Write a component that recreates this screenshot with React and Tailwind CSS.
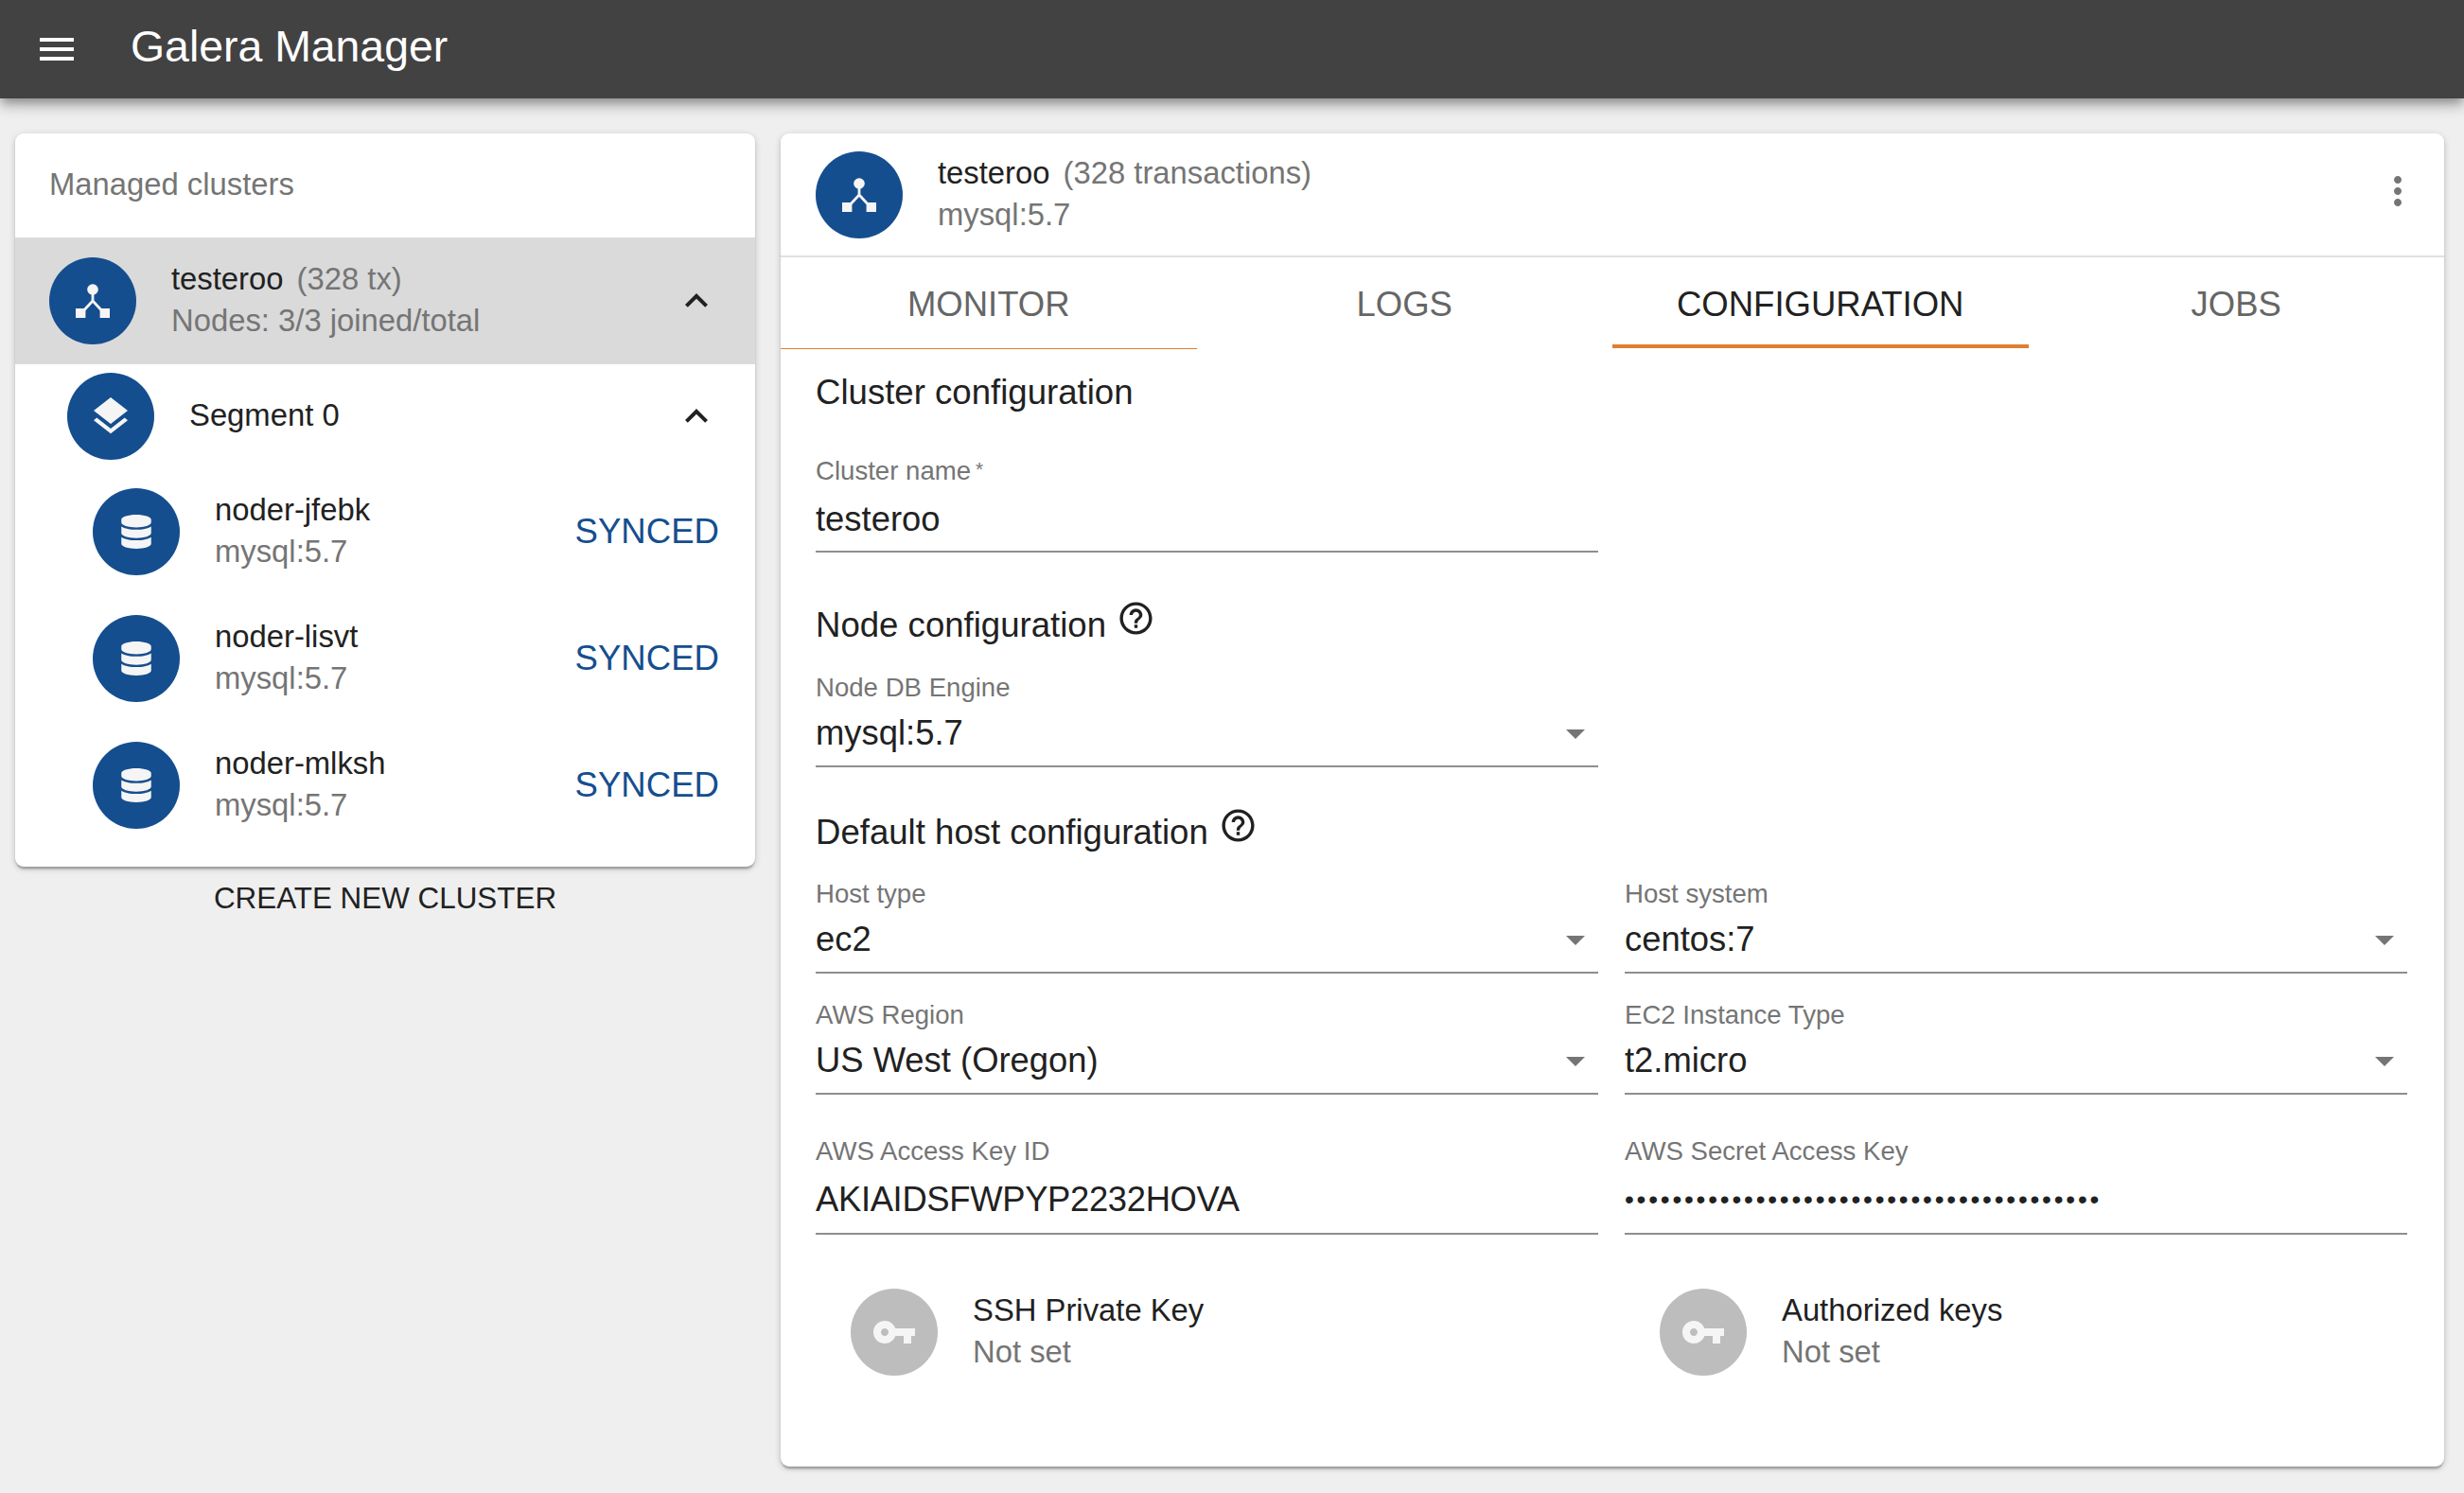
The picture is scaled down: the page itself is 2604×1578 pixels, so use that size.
import React from "react";
import { FaDatabase } from "react-icons/fa";

const Ic = ({ d, className }) => (
  <svg viewBox="0 0 24 24" fill="currentColor" className={className}><path d={d} /></svg>
);
const MENU = "M3 18h18v-2H3v2zm0-5h18v-2H3v2zm0-7v2h18V6H3z";
const LESS = "M12 8l-6 6 1.41 1.41L12 10.83l4.59 4.58L18 14z";
const LAYERS = "M11.99 18.54l-7.37-5.73L3 14.07l9 7 9-7-1.63-1.27-7.38 5.74zM12 16l7.36-5.73L21 9l-9-7-9 7 1.63 1.27L12 16z";
const KEY = "M12.65 10C11.83 7.67 9.61 6 7 6c-3.31 0-6 2.69-6 6s2.69 6 6 6c2.61 0 4.83-1.67 5.65-4H17v4h4v-4h2v-4H12.65zM7 14c-1.1 0-2-.9-2-2s.9-2 2-2 2 .9 2 2-.9 2-2 2z";
const HELP = "M11 18h2v-2h-2v2zm1-16C6.48 2 2 6.48 2 12s4.48 10 10 10 10-4.48 10-10S17.52 2 12 2zm0 18c-4.41 0-8-3.59-8-8s3.59-8 8-8 8 3.59 8 8-3.59 8-8 8zm0-14c-2.21 0-4 1.79-4 4h2c0-1.1.9-2 2-2s2 .9 2 2c0 2-3 1.75-3 5h2c0-2.25 3-2.5 3-5 0-2.21-1.79-4-4-4z";
const MORE = "M12 8c1.1 0 2-.9 2-2s-.9-2-2-2-2 .9-2 2 .9 2 2 2zm0 2c-1.1 0-2 .9-2 2s.9 2 2 2 2-.9 2-2-.9-2-2-2zm0 6c-1.1 0-2 .9-2 2s.9 2 2 2 2-.9 2-2-.9-2-2-2z";
const DROP = "M7 10l5 5 5-5z";

const ClusterIcon = () => (
  <svg viewBox="0 0 24 24" className="w-[48px] h-[48px] text-[#f5f5f5]" fill="currentColor">
    <circle cx="12" cy="6" r="2.9" />
    <path d="M12 8v4l-5 5.4M12 12l5 5.4" fill="none" stroke="currentColor" strokeWidth="1.4" />
    <rect x="3" y="16" width="5.2" height="5" />
    <rect x="15.8" y="16" width="5.2" height="5" />
  </svg>
);

const Avatar = ({ children, grey }) => (
  <div className={`w-[92px] h-[92px] rounded-full flex items-center justify-center shrink-0 ${grey ? "bg-[#bdbdbd]" : "bg-[#154e8f]"}`}>{children}</div>
);

const NodeRow = ({ name }) => (
  <div className="h-[134px] flex items-center pl-[82px] pr-[38px]">
    <Avatar><FaDatabase className="w-[32px] h-[36px] text-[#f5f5f5]" /></Avatar>
    <div className="ml-[37px] flex-1 -mt-[3px]">
      <div className="text-[32.8px] leading-[44px] text-[#212121]">{name}</div>
      <div className="text-[32.8px] leading-[44px] text-[#757575]">mysql:5.7</div>
    </div>
    <div className="text-[36.6px] text-[#154e8f]">SYNCED</div>
  </div>
);

const Field = ({ label, value, select, input, valueClass = "" }) => (
  <div className={`flex-1 min-w-0 border-b-2 border-[#8e8e8e] ${input ? "h-[104px]" : "h-[100px]"}`}>
    <div className="text-[27.6px] leading-[32px] text-[#757575]">{label}</div>
    <div className={`flex items-center h-[44px] text-[36.4px] text-[#212121] ${input ? "mt-[13px]" : "mt-[10px]"}`}>
      <span className={`flex-1 whitespace-nowrap ${valueClass}`}>{value}</span>
      {select && <Ic d={DROP} className="w-[48px] h-[48px] text-[#757575]" />}
    </div>
  </div>
);

const Heading = ({ children, help, className = "" }) => (
  <div className={`flex items-center text-[36.6px] leading-[44px] text-[#212121] ${className}`}>
    {children}
    {help && <Ic d={HELP} className="w-[41px] h-[41px] ml-[11px] -mt-[15px] text-[#212121]" />}
  </div>
);

const KeyItem = ({ title }) => (
  <div className="flex-1 flex items-center pl-[37px]">
    <Avatar grey><Ic d={KEY} className="w-[48px] h-[48px] text-[#f5f5f5]" /></Avatar>
    <div className="ml-[37px] -mt-[3px]">
      <div className="text-[32.8px] leading-[44px] text-[#212121]">{title}</div>
      <div className="text-[32.8px] leading-[44px] text-[#757575]">Not set</div>
    </div>
  </div>
);

const Tab = ({ children, active, thin }) => (
  <div className={`relative flex-1 flex items-center justify-center pt-[3px] text-[36.5px] ${active ? "text-[#212121]" : "text-[#666666]"}`}>
    {children}
    {active && <div className="absolute left-0 right-0 bottom-[1px] h-[4px] bg-[#e07f2e]" />}
    {thin && <div className="absolute left-0 right-0 bottom-0 h-[1.5px] bg-[#e07f2e]" />}
  </div>
);

export default function App() {
  return (
    <div className="w-[2604px] h-[1578px] bg-[#efefef] overflow-hidden font-['Liberation_Sans',Arial,sans-serif]">
      <header className="h-[104px] bg-[#424242] flex items-center pl-[36px] text-white shadow-[0_5px_9px_-2px_rgba(0,0,0,0.26),0_9px_12px_0_rgba(0,0,0,0.16),0_2px_23px_0_rgba(0,0,0,0.12)]">
        <Ic d={MENU} className="w-[48px] h-[48px]" />
        <div className="ml-[54px] -mt-[6px] text-[46.4px] leading-none">Galera Manager</div>
      </header>
      <main className="flex items-start gap-[27px] pl-[16px] pr-[21px] pt-[37px]">
        <div className="w-[782px] shrink-0">
          <div className="bg-white rounded-[9px] overflow-hidden shadow-[0_2px_7px_0_rgba(0,0,0,0.2),0_2px_2px_0_rgba(0,0,0,0.14),0_5px_2px_-2px_rgba(0,0,0,0.12)] pb-[19px]">
            <div className="h-[110px] flex items-center pl-[36px] pb-[3px] text-[32.8px] text-[#757575]">Managed clusters</div>
            <div className="h-[134px] bg-[#dadada] flex items-center pl-[36px] pr-[38px]">
              <Avatar><ClusterIcon /></Avatar>
              <div className="ml-[37px] flex-1 -mt-[3px]">
                <div className="text-[32.8px] leading-[44px] text-[#212121]">testeroo<span className="ml-[14px] text-[#757575]">(328 tx)</span></div>
                <div className="text-[32.8px] leading-[44px] text-[#757575]">Nodes: 3/3 joined/total</div>
              </div>
              <Ic d={LESS} className="w-[48px] h-[48px] text-[#212121]" />
            </div>
            <div className="h-[110px] flex items-center pl-[55px] pr-[38px]">
              <Avatar><Ic d={LAYERS} className="w-[48px] h-[48px] text-[#f5f5f5]" /></Avatar>
              <div className="ml-[37px] flex-1 -mt-[3px] text-[32.8px] text-[#212121]">Segment 0</div>
              <Ic d={LESS} className="w-[48px] h-[48px] text-[#212121]" />
            </div>
            <NodeRow name="noder-jfebk" />
            <NodeRow name="noder-lisvt" />
            <NodeRow name="noder-mlksh" />
          </div>
          <div className="h-[68px] flex items-center justify-center text-[31.4px] text-[#212121]">CREATE NEW CLUSTER</div>
        </div>

        <div className="flex-1 h-[1409px] bg-white rounded-[9px] overflow-hidden shadow-[0_2px_7px_0_rgba(0,0,0,0.2),0_2px_2px_0_rgba(0,0,0,0.14),0_5px_2px_-2px_rgba(0,0,0,0.12)]">
          <div className="h-[131px] border-b-2 border-[#e0e0e0] flex items-center pl-[37px] pr-[25px]">
            <Avatar><ClusterIcon /></Avatar>
            <div className="ml-[37px] flex-1 -mt-[2px]">
              <div className="text-[32.8px] leading-[44px] text-[#212121]">testeroo<span className="ml-[14px] text-[#757575]">(328 transactions)</span></div>
              <div className="text-[32.8px] leading-[44px] text-[#757575]">mysql:5.7</div>
            </div>
            <Ic d={MORE} className="w-[48px] h-[48px] -mt-[8px] text-[#757575]" />
          </div>
          <div className="flex h-[97px]">
            <Tab thin>MONITOR</Tab>
            <Tab>LOGS</Tab>
            <Tab active>CONFIGURATION</Tab>
            <Tab>JOBS</Tab>
          </div>
          <div className="pl-[37px] pr-[39px]">
            <Heading className="mt-[24px]">Cluster configuration</Heading>
            <div className="flex gap-[28px] mt-[43px]">
              <Field input label={<>Cluster name<span className="ml-[5px] text-[21px] align-[4px]">*</span></>} value="testeroo" />
              <div className="flex-1" />
            </div>
            <Heading help className="mt-[55px]">Node configuration</Heading>
            <div className="flex gap-[28px] mt-[28px]">
              <Field select label="Node DB Engine" value="mysql:5.7" />
              <div className="flex-1" />
            </div>
            <Heading help className="mt-[47px]">Default host configuration</Heading>
            <div className="flex gap-[28px] mt-[27px]">
              <Field select label="Host type" value="ec2" />
              <Field select label="Host system" value="centos:7" />
            </div>
            <div className="flex gap-[28px] mt-[28px]">
              <Field select label="AWS Region" value="US West (Oregon)" />
              <Field select label="EC2 Instance Type" value="t2.micro" />
            </div>
            <div className="flex gap-[28px] mt-[44px]">
              <Field input label="AWS Access Key ID" value="AKIAIDSFWPYP2232HOVA" valueClass="tracking-[-0.33px]" />
              <Field input label="AWS Secret Access Key" value="••••••••••••••••••••••••••••••••••••••••" valueClass="text-[28px] tracking-[2.8px]" />
            </div>
            <div className="flex gap-[28px] mt-[57px]">
              <KeyItem title="SSH Private Key" />
              <KeyItem title="Authorized keys" />
            </div>
          </div>
        </div>
      </main>
    </div>
  );
}
